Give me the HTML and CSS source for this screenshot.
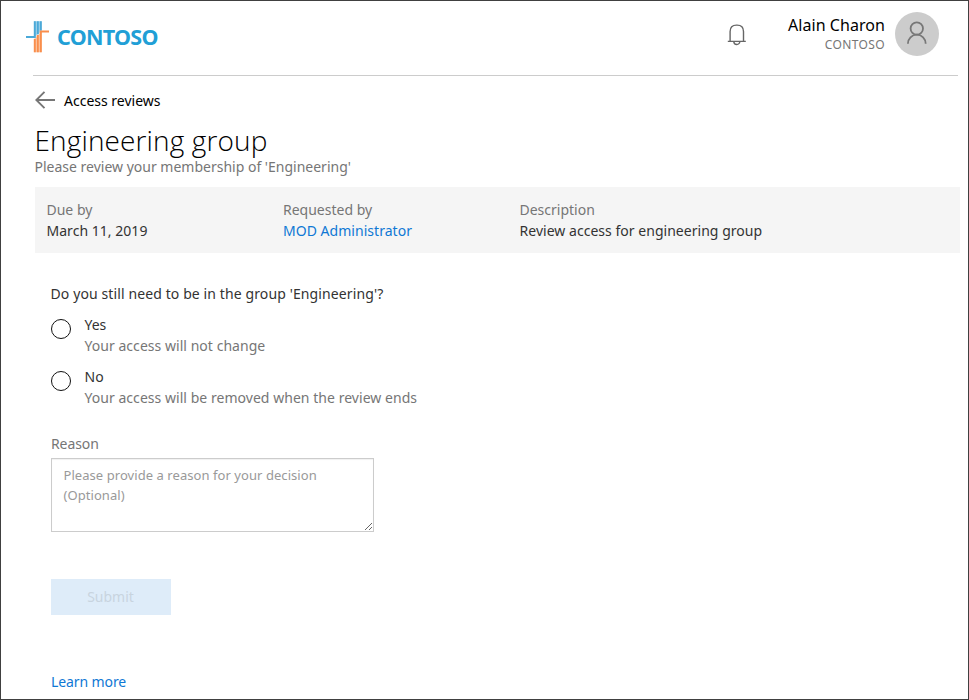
FILE: index.html
```html
<!DOCTYPE html>
<html lang="en">
<head>
<meta charset="utf-8">
<title>Access reviews</title>
<link rel="stylesheet" href="styles.css">
</head>
<body>
<div class="page">
  <header class="header">
    <div class="brand">
      <svg class="brand-mark" width="24" height="32" viewBox="0 0 24 32" fill="none" stroke-width="2">
        <path fill="#a9d6ec" d="M8 .2H15.6V10L8 16.5z"/>
        <path fill="#fccdae" d="M8 18L15.6 10.5V31.3H8z"/>
        <g stroke="#4ba9d8"><path d="M0 15.9H8.8V.2M11.8 .2V13.2M14.8 .2V9.5"/></g>
        <g stroke="#f98e4c"><path d="M23 10.5H14.8V31.3M11.8 14V31.3M8.8 18V31.3"/></g>
      </svg>
      <span class="brand-name">CONTOSO</span>
    </div>
    <div class="account">
      <svg class="bell" width="20" height="22" viewBox="0 0 20 22" fill="none" stroke="#666" stroke-width="1.4">
        <path d="M3.1 17V7.5Q3.1 1.1 9.5 1.1H10.1Q16.5 1.1 16.5 7.5V17M.8 17.4H18.8M6.8 17.5a3 3 0 0 0 6 0"/>
      </svg>
      <div class="who">
        <div class="who-name">Alain Charon</div>
        <div class="who-org">CONTOSO</div>
      </div>
      <div class="avatar">
        <svg width="20" height="23" viewBox="0 0 20 23" fill="none" stroke="#777" stroke-width="1.8">
          <circle cx="9.8" cy="7.5" r="6.2"/><path d="M.9 22.7a8.9 9 0 0 1 17.8 0"/>
        </svg>
      </div>
    </div>
  </header>
  <main>
    <a class="back">
      <svg class="back-arrow" width="20" height="18" viewBox="0 0 20 18" fill="none" stroke="#767676" stroke-width="1.9"><path d="M9.5 .8L1.3 9l8.2 8.2M1.3 9H20"/></svg>
      <span>Access reviews</span>
    </a>
    <h1 class="title">Engineering group</h1>
    <p class="subtitle">Please review your membership of 'Engineering'</p>
    <section class="facts">
      <div><div class="label">Due by</div><div class="value">March 11, 2019</div></div>
      <div><div class="label">Requested by</div><div class="value link">MOD Administrator</div></div>
      <div><div class="label">Description</div><div class="value">Review access for engineering group</div></div>
    </section>
    <form class="form">
      <p class="question">Do you still need to be in the group 'Engineering'?</p>
      <label class="option"><input type="radio" name="decision"><span><span class="opt-name">Yes</span><span class="opt-hint">Your access will not change</span></span></label>
      <label class="option"><input type="radio" name="decision"><span><span class="opt-name">No</span><span class="opt-hint">Your access will be removed when the review ends</span></span></label>
      <label class="reason-label" for="reason">Reason</label>
      <textarea class="reason" id="reason" placeholder="Please provide a reason for your decision (Optional)"></textarea>
      <button class="submit" type="button" disabled>Submit</button>
      <a class="link learn">Learn more</a>
    </form>
  </main>
</div>
</body>
</html>
```
FILE: styles.css
```css
* { box-sizing: border-box; }
body { margin: 0; font: 14px/21px "Noto Sans", "Open Sans", sans-serif; color: #333; background: #fff; }
p, h1 { margin: 0; }
.page { height: 700px; border: 1px solid #404040; overflow: hidden; }
.header { height: 75px; margin: 0 10px 0 32px; border-bottom: 1px solid #ccc; display: flex; justify-content: space-between; }
.brand { display: flex; align-items: flex-start; gap: 7px; margin-left: -7px; padding-top: 20px; }
.brand-name { font: 700 21.5px/32px "Noto Sans", sans-serif; letter-spacing: -0.7px; color: #219fd6; }
.account { display: flex; padding: 11px 19px 0 0; }
.bell { margin: 12px 41.5px 0 0; }
.who { text-align: right; margin-right: 10px; color: #000; }
.who-name { font-size: 16px; line-height: 26px; letter-spacing: 0.05px; }
.who-org { font-size: 12px; line-height: 14px; letter-spacing: 0.38px; color: #767676; }
.avatar { width: 44px; height: 44px; border-radius: 50%; background: #ccc; display: flex; justify-content: center; padding-top: 9px; }
main { padding-left: 34px; }
.back { display: flex; align-items: flex-start; gap: 9px; height: 21px; margin-top: 14px; color: #000; }
.back-arrow { margin-top: 1px; }
.title { font: 300 28px/30px "Open Sans", "Noto Sans", sans-serif; letter-spacing: 0.13px; margin: 14px 0 0 -0.5px; color: #000; }
.subtitle { color: #767676; margin: 1px 0 0 -0.5px; }
.facts { display: grid; grid-template-columns: 236.5px 236.5px 1fr; width: 925px; height: 66px; margin-top: 10px; padding: 12px 12px 12px 11.5px; background: #f5f5f5; }
.label { color: #767676; }
.value { letter-spacing: 0.03px; }
.link { color: #0f78d4; }
.form { padding-left: 16px; margin-top: 30px; display: flex; flex-direction: column; align-items: flex-start; }
.question { letter-spacing: 0.11px; margin-left: -0.5px; }
.option { display: flex; gap: 13.5px; margin-top: 10px; }
.option input { appearance: none; width: 20px; height: 20px; border: 1.5px solid #111; border-radius: 50%; margin: 5px 0 0; }
.opt-name, .opt-hint { display: block; }
.opt-hint { color: #767676; letter-spacing: 0.04px; }
.reason-label { margin-top: 25px; color: #767676; letter-spacing: -0.1px; }
.reason { width: 323px; height: 74px; margin-top: 4px; padding: 6px 12px 6px 11.5px; border: 1px solid #ccc; font: 13px/20px "Noto Sans", sans-serif; letter-spacing: 0.06px; resize: both; display: block; box-shadow: inset 0 1px 1px rgba(0, 0, 0, 0.06); }
.reason::placeholder { color: #999; }
.submit { width: 120px; height: 36px; margin-top: 47px; border: 0; padding: 0 1px 2px 0; background: #deecf9; color: #c8d4df; font: inherit; }
.learn { margin-top: 56px; letter-spacing: -0.1px; }
```
